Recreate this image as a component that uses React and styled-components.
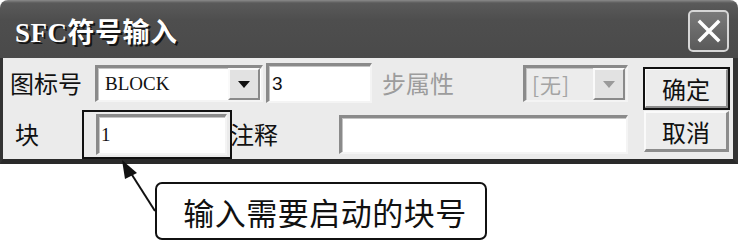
import React from "react";
import styled, { createGlobalStyle } from "styled-components";

const GlobalStyle = createGlobalStyle`
  html, body {
    margin: 0;
    padding: 0;
    background: #ffffff;
  }
  body {
    font-family: "Noto Sans CJK SC", "Liberation Sans", sans-serif;
  }
`;

const Page = styled.div`
  position: relative;
  width: 741px;
  height: 242px;
  overflow: hidden;
  background: #fff;
`;

const Window = styled.div`
  width: 738px;
  border-radius: 8px 8px 0 0;
  overflow: hidden;
`;

const TitleBar = styled.div`
  height: 58px;
  display: flex;
  align-items: center;
  justify-content: space-between;
  padding: 0 9px 0 15px;
  box-sizing: border-box;
  background: linear-gradient(#8a8a8a 0, #5a5a5a 3px, #4e4e4e 20px, #4a4a4a 100%);
`;

const Title = styled.div`
  color: #fff;
  font-family: "Liberation Serif", "Noto Sans CJK SC", serif;
  font-weight: 700;
  font-size: 27px;
  letter-spacing: 0.5px;
  text-shadow: 2px 2px 0 #151515;
  margin-top: 2px;
`;

const CloseButton = styled.div`
  width: 41px;
  height: 42px;
  box-sizing: border-box;
  border: 2px solid #d6d6d6;
  border-radius: 5px;
  background: linear-gradient(#7a7a7a, #5a5a5a);
  display: flex;
  align-items: center;
  justify-content: center;
  margin-top: 4px;
`;

const Body = styled.div`
  display: flex;
  align-items: flex-start;
  background: #ebebeb;
  border-left: 3px solid #333;
  border-right: 5px solid #333;
  border-bottom: 5px solid #2a2a2a;
  padding: 5px 4px 4px 7px;
`;

const Form = styled.div`
  display: flex;
  flex-direction: column;
  gap: 10px;
`;

const Row = styled.div`
  display: flex;
  align-items: center;
  height: ${(p) => p.$h}px;
`;

const Label = styled.div`
  width: ${(p) => p.$w}px;
  margin-left: ${(p) => p.$ml || 0}px;
  padding-left: ${(p) => p.$pl || 0}px;
  box-sizing: border-box;
  font-size: 24px;
  line-height: 1;
  color: ${(p) => (p.$disabled ? "#9c9c9c" : "#111")};
  white-space: nowrap;
`;

const Sunken = styled.div`
  position: relative;
  width: ${(p) => p.$w}px;
  height: ${(p) => p.$h}px;
  margin-left: ${(p) => p.$ml || 0}px;
  box-sizing: border-box;
  background: ${(p) => (p.$disabled ? "#ececec" : "#fff")};
  border-top: 3px solid #8a8a8a;
  border-left: 3px solid #8a8a8a;
  border-bottom: 2px solid #f4f4f4;
  border-right: 2px solid #f4f4f4;
  box-shadow: inset 1px 1px 0 #c4c4c4;
  display: flex;
  align-items: center;
`;

const FieldText = styled.span`
  padding-left: ${(p) => p.$pl || 4}px;
  font-family: ${(p) =>
    p.$sans ? '"Liberation Sans", sans-serif' : '"Liberation Serif", serif'};
  font-size: 19px;
  color: #111;
`;

const DisabledText = styled.span`
  padding-left: 6px;
  font-size: 21px;
  color: #a4a4a4;
  letter-spacing: 1px;
`;

const DropButton = styled.div`
  position: absolute;
  right: 1px;
  top: 0;
  width: 32px;
  height: 32px;
  box-sizing: border-box;
  background: #e2e2e2;
  border-top: 2px solid #fafafa;
  border-left: 2px solid #fafafa;
  border-bottom: 2px solid #8a8a8a;
  border-right: 2px solid #8a8a8a;
  display: flex;
  align-items: center;
  justify-content: center;
`;

const Arrow = styled.div`
  width: 0;
  height: 0;
  border-left: 6px solid transparent;
  border-right: 6px solid transparent;
  border-top: 7px solid ${(p) => (p.$disabled ? "#9a9a9a" : "#111")};
  margin-top: 2px;
`;

const Highlighted = styled.div`
  position: relative;
`;

const HighlightBox = styled.div`
  position: absolute;
  left: -14px;
  right: -5px;
  top: -4px;
  bottom: -4px;
  border: 2px solid #111;
  pointer-events: none;
`;

const Buttons = styled.div`
  display: flex;
  flex-direction: column;
  gap: 2px;
  margin-left: 16px;
  padding-top: 5px;
`;

const Button = styled.div`
  width: 85px;
  height: 41px;
  box-sizing: border-box;
  background: #ececec;
  border-top: 2px solid #fafafa;
  border-left: 2px solid #fafafa;
  border-bottom: 3px solid #8c8c8c;
  border-right: 3px solid #8c8c8c;
  outline: ${(p) => (p.$default ? "2px solid #111" : "none")};
  outline-offset: -1px;
  display: flex;
  align-items: center;
  justify-content: center;
  font-size: 24px;
  color: #111;
`;

const Callout = styled.div`
  margin: 18px 0 0 155px;
  width: 332px;
  height: 58px;
  box-sizing: border-box;
  border: 2px solid #111;
  border-radius: 7px;
  display: flex;
  align-items: center;
  justify-content: center;
  font-size: 31px;
  letter-spacing: 0.5px;
  color: #111;
  padding-left: 8px;
`;

const Overlay = styled.svg`
  position: absolute;
  left: 0;
  top: 0;
  pointer-events: none;
`;

export default function App() {
  return (
    <>
      <GlobalStyle />
      <Page>
        <Window>
          <TitleBar>
            <Title>SFC符号输入</Title>
            <CloseButton>
              <svg width="24" height="24" viewBox="0 0 24 24">
                <path d="M3 3 L21 21 M21 3 L3 21" stroke="#fff" strokeWidth="3.5" strokeLinecap="square" />
              </svg>
            </CloseButton>
          </TitleBar>
          <Body>
            <Form>
              <Row $h={40}>
                <Label $w={85}>图标号</Label>
                <Sunken $w={168} $h={37}>
                  <FieldText $pl={7}>BLOCK</FieldText>
                  <DropButton>
                    <Arrow />
                  </DropButton>
                </Sunken>
                <Sunken $w={106} $h={40} $ml={3}>
                  <FieldText $sans $pl={3}>3</FieldText>
                </Sunken>
                <Label $w={141} $ml={10} $disabled>步属性</Label>
                <Sunken $w={105} $h={37} $disabled>
                  <DisabledText>[无]</DisabledText>
                  <DropButton>
                    <Arrow $disabled />
                  </DropButton>
                </Sunken>
              </Row>
              <Row $h={42}>
                <Label $w={86} $pl={5}>块</Label>
                <Highlighted>
                  <Sunken $w={131} $h={41}>
                    <FieldText $pl={2}>1</FieldText>
                  </Sunken>
                  <HighlightBox />
                </Highlighted>
                <Label $w={109} $ml={3}>注释</Label>
                <Sunken $w={289} $h={39} />
              </Row>
            </Form>
            <Buttons>
              <Button $default>确定</Button>
              <Button>取消</Button>
            </Buttons>
          </Body>
        </Window>
        <Callout>输入需要启动的块号</Callout>
        <Overlay width="741" height="242">
          <line x1="155" y1="211" x2="127" y2="167" stroke="#111" strokeWidth="2" />
          <polygon points="122,160 137,173 125,179" fill="#111" />
        </Overlay>
      </Page>
    </>
  );
}
